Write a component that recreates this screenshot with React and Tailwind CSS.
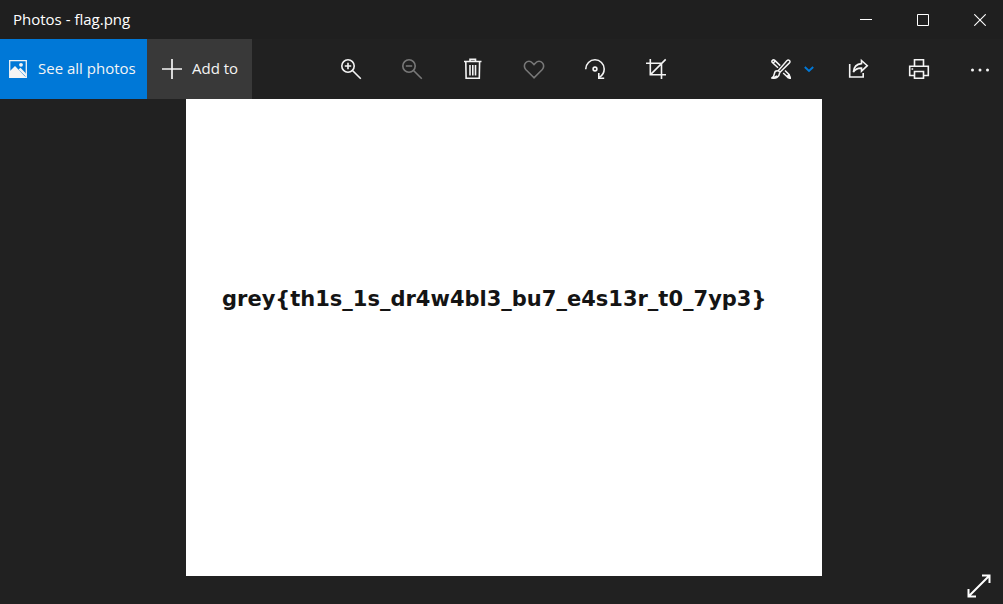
import React from "react";

function Icon({ children, className = "size-6", box = "0 0 24 24", width = 1.6 }) {
  return (
    <svg
      viewBox={box}
      className={`${className} shrink-0`}
      fill="none"
      stroke="currentColor"
      strokeWidth={width}
      aria-hidden="true"
    >
      {children}
    </svg>
  );
}

function ToolButton({ label, disabled, muted, children }) {
  return (
    <button
      type="button"
      aria-label={label}
      disabled={disabled}
      className={`flex h-[60px] w-[46px] items-center justify-center ${muted ? "text-[#787878]" : "text-[#f4f4f4]"}`}
    >
      {children}
    </button>
  );
}

function TitleBar() {
  return (
    <header className="flex h-[39px] items-center justify-between bg-[#1f1f1f] text-white">
      <h1 className="pb-0.5 pl-[13px] text-[15px] leading-5">Photos - flag.png</h1>
      <div className="flex h-full gap-[11px]">
        <button type="button" aria-label="Minimize" className="flex w-[46px] items-center justify-center">
          <Icon className="size-3" box="0 0 12 12" width={1}>
            <path d="M0 5.5h12" />
          </Icon>
        </button>
        <button type="button" aria-label="Maximize" className="flex w-[46px] items-center justify-center">
          <Icon className="size-3" box="0 0 12 12" width={1}>
            <path d="M.5.5h11v11H.5z" />
          </Icon>
        </button>
        <button type="button" aria-label="Close" className="flex w-[46px] items-center justify-center">
          <Icon className="size-3" box="0 0 12 12" width={1.1}>
            <path d="M.3.3l11.4 11.4M11.7.3L.3 11.7" />
          </Icon>
        </button>
      </div>
    </header>
  );
}

function Toolbar() {
  return (
    <nav className="flex h-[60px] text-[15px] leading-5 text-[#f4f4f4]">
      <button type="button" className="flex w-[147px] shrink-0 items-center gap-[11px] bg-[#0078d7] pl-[9px]">
        <Icon className="size-[18px]" box="0 0 18 18" width={1.3}>
          <path d="M.7.7h16.6v16.6H.7z" />
          <path d="M1 11l5-5 10.8 11.3H1z" fill="currentColor" stroke="none" />
          <path d="M9.5 9.5l2-1.7 5.5 5.7v3.2z" fill="currentColor" stroke="none" />
          <circle cx="12" cy="4.8" r="1.9" fill="currentColor" stroke="none" />
        </Icon>
        <span className="pb-0.5">See all photos</span>
      </button>
      <button type="button" className="flex w-[105px] shrink-0 items-center gap-[10px] bg-[#393939] pl-[15px]">
        <Icon className="size-5" box="0 0 20 20" width={1.7}>
          <path d="M0 10h20M10 0v20" />
        </Icon>
        <span className="pb-0.5">Add to</span>
      </button>

      <div className="flex flex-1 justify-center gap-[15px]">
        <ToolButton label="Zoom in">
          <Icon>
            <circle cx="9" cy="9" r="6.2" />
            <path d="M13.5 13.5l8.3 8.3M5.8 9h6.4M9 5.8v6.4" />
          </Icon>
        </ToolButton>
        <ToolButton label="Zoom out" muted disabled>
          <Icon>
            <circle cx="9" cy="9" r="6.2" />
            <path d="M13.5 13.5l8.3 8.3M5.8 9h6.4" />
          </Icon>
        </ToolButton>
        <ToolButton label="Delete">
          <Icon>
            <path d="M3 4.5h17.5M9 4.2V2.4h5.5v1.8M4.8 4.7l.3 16.5h13.2l.3-16.5" />
            <path d="M9 8v10.5M11.8 8v10.5M14.5 8v10.5" />
          </Icon>
        </ToolButton>
        <ToolButton label="Add to favourites" muted>
          <Icon>
            <path d="M12 20.800L3.700 12.500C1.900 10.600 2 7.500 3.700 5.700c1.800-1.900 4.700-1.900 6.500 0L12 7.500l1.800-1.800c1.800-1.900 4.700-1.900 6.500 0 1.800 1.800 1.800 4.900 0 6.800z" />
          </Icon>
        </ToolButton>
        <ToolButton label="Rotate">
          <Icon>
            <path d="M2.700 12.300C2.700 6.800 7 2.800 12 2.800s9.200 4.100 9.200 9.100c0 3.700-1.900 6.600-5 8.600" />
            <path d="M15.800 16v5.200h5.400" />
            <circle cx="12" cy="12" r="1.900" />
          </Icon>
        </ToolButton>
        <ToolButton label="Crop">
          <Icon>
            <path d="M2 6.300h15.500V22M6.300 2v15.800H22M6.500 17.600L21.700 2.400" />
          </Icon>
        </ToolButton>
      </div>

      <div className="flex gap-[15px]">
        <button type="button" aria-label="Edit and create" className="flex w-[65px] items-center gap-[13px] pl-4">
          <Icon className="size-5" box="0 0 20 20" width={1.5}>
            <path d="M7 8.700L1.600 3.700c-1-1-.9-1.700-.2-2.300.7-.7 1.600-.7 2.400 0L9.200 6.600M2 4.300l2.500-2.500" />
            <path d="M12.200 14l4.100 3.900 2.900 1.200-1-3.500-4.200-4.100M15.800 17.900l2.100-2" />
            <path d="M18.300 17l1.200 2.400-2.400-.8z" fill="currentColor" />
            <path d="M7.200 11.700L15.800 1.800c1-.9 1.800-1 2.600-.3.800.8.800 1.600-.2 2.600L9 13.300z" />
            <path d="M6.900 11.900c-2-.2-3.300.9-3.500 2.700-.2 1.900-.8 3-2.500 4.300 4 1 7.300-.6 7.800-5.200M1.500 18.400c2 .2 3.300-.3 4.500-1.600" />
          </Icon>
          <Icon className="size-[10px] text-[#0078d7]" box="0 0 10 10" width={1.9}>
            <path d="M.8 3l4.200 4L9.200 3" />
          </Icon>
        </button>
        <ToolButton label="Share">
          <Icon>
            <path d="M3.700 7v13h13.500v-4" />
            <path d="M15.500 3.500l5.800 5.200-5.800 5.500v-3.100c-3.500-.2-6.200 1-8.100 4 .4-4.900 3.200-8.200 8.100-8.500z" />
          </Icon>
        </ToolButton>
        <ToolButton label="Print">
          <Icon>
            <path d="M7.500 9V2.700h9V9M7.500 18.500H2.700V9.300h18.600v9.200h-4.800" />
            <path d="M7.500 14.500h9v6.800h-9zM4.500 12h1.700" />
          </Icon>
        </ToolButton>
        <ToolButton label="See more">
          <Icon>
            <g fill="currentColor" stroke="none">
              <circle cx="4.500" cy="13" r="1.500" />
              <circle cx="12" cy="13" r="1.500" />
              <circle cx="19.500" cy="13" r="1.500" />
            </g>
          </Icon>
        </ToolButton>
      </div>
    </nav>
  );
}

export default function App() {
  return (
    <div className="relative flex min-h-screen flex-col bg-[#212121] font-['Open_Sans','Noto_Sans',sans-serif]">
      <TitleBar />
      <Toolbar />
      <main className="flex flex-1 items-start justify-center pl-[5px]">
        <figure className="aspect-4/3 w-[636px] bg-white pt-[184px] pl-9">
          <p className="font-['Verdana','DejaVu_Sans',sans-serif] text-[21px] leading-8 font-bold whitespace-nowrap text-[#141414]">
            {"grey{th1s_1s_dr4w4bl3_bu7_e4s13r_t0_7yp3}"}
          </p>
        </figure>
      </main>
      <button type="button" aria-label="Full screen" className="absolute right-3 bottom-[6px] text-white">
        <Icon className="size-6" width={2}>
          <path d="M1.500 22.500L22.500 1.500M15 1.500h7.500V9M1.500 15v7.500H9" />
        </Icon>
      </button>
    </div>
  );
}
